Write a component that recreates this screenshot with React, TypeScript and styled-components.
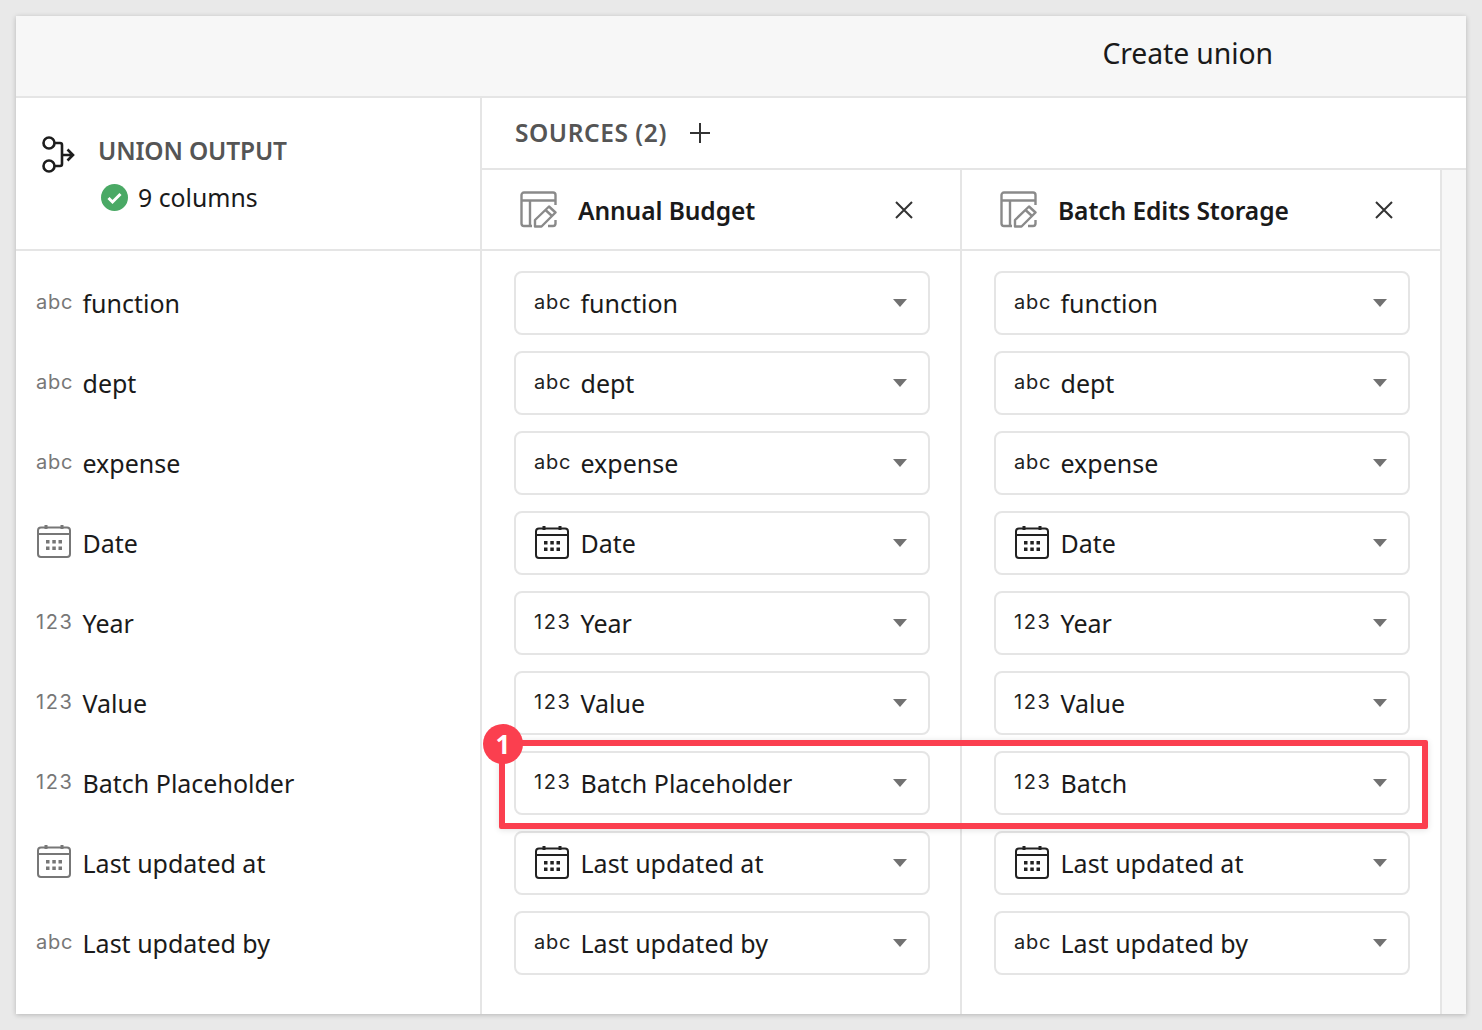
import React from 'react'
import styled, {createGlobalStyle} from 'styled-components'

type ColumnKind = 'abc' | '123' | 'date'
type Column = {kind: ColumnKind; name: string; other?: string}

const COLUMNS: Column[] = [
  {kind: 'abc', name: 'function'},
  {kind: 'abc', name: 'dept'},
  {kind: 'abc', name: 'expense'},
  {kind: 'date', name: 'Date'},
  {kind: '123', name: 'Year'},
  {kind: '123', name: 'Value'},
  {kind: '123', name: 'Batch Placeholder', other: 'Batch'},
  {kind: 'date', name: 'Last updated at'},
  {kind: 'abc', name: 'Last updated by'},
]

const GlobalStyle = createGlobalStyle`
  html, body {
    margin: 0;
    height: 100%;
    background: #e9e9e9;
  }
  body {
    font-family: "Noto Sans", "Open Sans", sans-serif;
    color: #1a1a1a;
    overflow: hidden;
  }
`

const Page = styled.div`
  padding: 16px;
`

const Dialog = styled.main`
  position: relative;
  width: 1450px;
  height: 998px;
  display: flex;
  flex-direction: column;
  background: #fff;
  box-shadow: 0 1px 5px rgba(0, 0, 0, 0.22);
`

const TitleBar = styled.header`
  height: 82px;
  flex: none;
  box-sizing: border-box;
  display: flex;
  align-items: center;
  justify-content: flex-end;
  padding: 0 193px 6px 0;
  background: #f7f7f7;
  border-bottom: 2px solid #e5e5e5;
  font-size: 28.4px;
  letter-spacing: -0.1px;
`

const Body = styled.div`
  flex: 1;
  display: flex;
  min-height: 0;
`

const OutputPane = styled.section`
  width: 466px;
  flex: none;
  box-sizing: border-box;
  border-right: 2px solid #e5e5e5;
`

const OutputHead = styled.div`
  height: 153px;
  box-sizing: border-box;
  display: flex;
  padding: 36px 0 0 25px;
  border-bottom: 2px solid #e5e5e5;
`

const UnionGlyph = styled.svg`
  margin-top: 1px;
  flex: none;
`

const OutputText = styled.div`
  margin-left: 23px;
`

const SectionLabel = styled.h2<{$tight?: boolean}>`
  margin: 0;
  font-size: 24.5px;
  line-height: 34px;
  font-weight: 600;
  color: #555;
  letter-spacing: ${({$tight}) => ($tight ? '-0.15px' : '0.55px')};
`

const Status = styled.div`
  display: flex;
  align-items: center;
  gap: 10px;
  margin-top: 12px;
  margin-left: 3px;
  font-size: 24.8px;
  line-height: 34px;
`

const RowList = styled.div`
  padding-top: 12px;
`

const OutputRow = styled.div`
  height: 80px;
  display: flex;
  align-items: center;
  padding-left: 20px;
  font-size: 25px;
`

const TypeTag = styled.span<{$muted?: boolean; $numeric?: boolean}>`
  width: 46.500px;
  flex: none;
  display: flex;
  align-items: center;
  margin-top: ${({$muted}) => ($muted ? '-3px' : '-1px')};
  font-family: Inter, "Noto Sans", sans-serif;
  font-size: 20px;
  letter-spacing: ${({$numeric}) => ($numeric ? '1.6px' : '0.7px')};
  color: ${({$muted}) => ($muted ? '#777' : '#222')};
`

const SourcesPane = styled.section`
  flex: 1;
  min-width: 0;
  display: flex;
  flex-direction: column;
`

const SourcesBar = styled.div`
  height: 72px;
  flex: none;
  box-sizing: border-box;
  display: flex;
  align-items: center;
  gap: 22px;
  padding: 0 0 1px 33px;
  border-bottom: 2px solid #e5e5e5;
`

const SourceGrid = styled.div`
  flex: 1;
  display: flex;
  background: #f7f7f7;
`

const SourceColumn = styled.div`
  width: 480px;
  box-sizing: border-box;
  background: #fff;
  border-right: 2px solid #e5e5e5;
`

const SourceHead = styled.div`
  height: 81px;
  box-sizing: border-box;
  display: flex;
  align-items: center;
  padding: 0 47px 0 38px;
  border-bottom: 2px solid #e5e5e5;
`

const SourceName = styled.h3`
  flex: 1;
  margin: 2px 0 0 21px;
  font-size: 24.6px;
  font-weight: 600;
  letter-spacing: -0.1px;
`

const SourceRows = styled.div`
  padding-top: 20px;
`

const SelectRow = styled.div`
  height: 80px;
  box-sizing: border-box;
  padding-left: 32px;
`

const Select = styled.div`
  width: 416px;
  height: 64px;
  box-sizing: border-box;
  display: flex;
  align-items: center;
  padding: 0 21px 1px 18px;
  background: #fff;
  border: 2px solid #e5e5e5;
  border-radius: 8px;
  font-size: 25px;
`

const SelectText = styled.span`
  flex: 1;
`

const CaretGlyph = styled.svg`
  flex: none;
  margin-top: 1px;
`

const CalendarGlyph = styled.svg`
  flex: none;
  margin-left: 1px;
`

const Highlight = styled.div`
  position: absolute;
  left: 483px;
  top: 724px;
  width: 929px;
  height: 89px;
  box-sizing: border-box;
  border: 6px solid #fb3f4f;
  border-radius: 2px;
  box-shadow: 0 1px 6px rgba(0, 0, 0, 0.12);
`

const Badge = styled.div`
  position: absolute;
  left: 467px;
  top: 708px;
  width: 40px;
  height: 40px;
  display: flex;
  align-items: center;
  justify-content: center;
  border-radius: 50%;
  background: #fb3f4f;
  color: #fff;
  font-size: 26px;
  font-weight: 700;
`

const UnionIcon = () => (
  <UnionGlyph width="34" height="40" viewBox="0 0 34 40" fill="none" stroke="#1d1d1d" strokeWidth="2.6">
    <circle cx="8" cy="8" r="5.5" />
    <circle cx="8" cy="31" r="5.5" />
    <path d="M13.5 8H19a2 2 0 0 1 2 2v19a2 2 0 0 1-2 2h-5.500" />
    <path d="M21 20h11M26.500 14.500 32 20l-5.500 5.500" />
  </UnionGlyph>
)

const CheckBadge = () => (
  <svg width="27" height="27" viewBox="0 0 27 27">
    <circle cx="13.5" cy="13.5" r="13.5" fill="#4aa965" />
    <path d="M7.500 14l4 4 8-8" fill="none" stroke="#fff" strokeWidth="3" />
  </svg>
)

const PlusIcon = () => (
  <svg width="22" height="22" viewBox="0 0 22 22" stroke="#333" strokeWidth="2">
    <path d="M11 1v20M1 11h20" />
  </svg>
)

const CloseIcon = () => (
  <svg width="18" height="18" viewBox="0 0 18 18" stroke="#333" strokeWidth="2">
    <path d="M1 1l16 16M17 1 1 17" />
  </svg>
)

const TableEditIcon = () => (
  <svg width="37" height="37" viewBox="0 0 37 37" fill="none" stroke="#8a8a8a" strokeWidth="2.4" strokeLinejoin="round">
    <path d="M12 35H4a2.500 2.500 0 0 1-2.500-2.500V4A2.500 2.500 0 0 1 4 1.500h29A2.500 2.500 0 0 1 35.500 4v10" />
    <path d="M1.500 9.500h34M10 9.500V35" />
    <path d="M28 35h5a2.500 2.500 0 0 0 2.500-2.500V29" />
    <path d="M15 35.500v-6.500L29 15.500l6.500 6-14 14zM25.500 19l6.500 6" />
  </svg>
)

const CalendarIcon = ({muted}: {muted?: boolean}) => {
  const color = muted ? '#777' : '#222'
  return (
    <CalendarGlyph width="34" height="33" viewBox="0 0 34 33" fill="none" stroke={color} strokeWidth="2">
      <rect x="1" y="2.500" width="32" height="29.500" rx="3" />
      <path d="M1 9h32" />
      <path d="M9 0v4M25 0v4" strokeWidth="3" />
      <g fill={color} stroke="none">
        <rect x="9" y="15" width="3.500" height="3.500" />
        <rect x="15.300" y="15" width="3.500" height="3.500" />
        <rect x="21.500" y="15" width="3.500" height="3.500" />
        <rect x="9" y="21.500" width="3.500" height="3.500" />
        <rect x="15.300" y="21.500" width="3.500" height="3.500" />
        <rect x="21.500" y="21.500" width="3.500" height="3.500" />
      </g>
    </CalendarGlyph>
  )
}

const Caret = () => (
  <CaretGlyph width="14" height="8" viewBox="0 0 14 8">
    <path d="M0 0h14L7 8z" fill="#717171" />
  </CaretGlyph>
)

const TypeIcon = ({kind, muted}: {kind: ColumnKind; muted?: boolean}) => (
  <TypeTag $muted={muted} $numeric={kind === '123'}>
    {kind === 'date' ? <CalendarIcon muted={muted} /> : kind}
  </TypeTag>
)

const SOURCES = ['Annual Budget', 'Batch Edits Storage']

const App = () => (
  <Page>
    <GlobalStyle />
    <Dialog>
      <TitleBar>Create union</TitleBar>
      <Body>
        <OutputPane>
          <OutputHead>
            <UnionIcon />
            <OutputText>
              <SectionLabel $tight>UNION OUTPUT</SectionLabel>
              <Status>
                <CheckBadge />
                9 columns
              </Status>
            </OutputText>
          </OutputHead>
          <RowList>
            {COLUMNS.map((c) => (
              <OutputRow key={c.name}>
                <TypeIcon kind={c.kind} muted />
                {c.name}
              </OutputRow>
            ))}
          </RowList>
        </OutputPane>
        <SourcesPane>
          <SourcesBar>
            <SectionLabel>SOURCES (2)</SectionLabel>
            <PlusIcon />
          </SourcesBar>
          <SourceGrid>
            {SOURCES.map((source, i) => (
              <SourceColumn key={source}>
                <SourceHead>
                  <TableEditIcon />
                  <SourceName>{source}</SourceName>
                  <CloseIcon />
                </SourceHead>
                <SourceRows>
                  {COLUMNS.map((c) => (
                    <SelectRow key={c.name}>
                      <Select>
                        <TypeIcon kind={c.kind} />
                        <SelectText>{i === 1 && c.other ? c.other : c.name}</SelectText>
                        <Caret />
                      </Select>
                    </SelectRow>
                  ))}
                </SourceRows>
              </SourceColumn>
            ))}
          </SourceGrid>
        </SourcesPane>
      </Body>
      <Highlight />
      <Badge>1</Badge>
    </Dialog>
  </Page>
)

export default App
